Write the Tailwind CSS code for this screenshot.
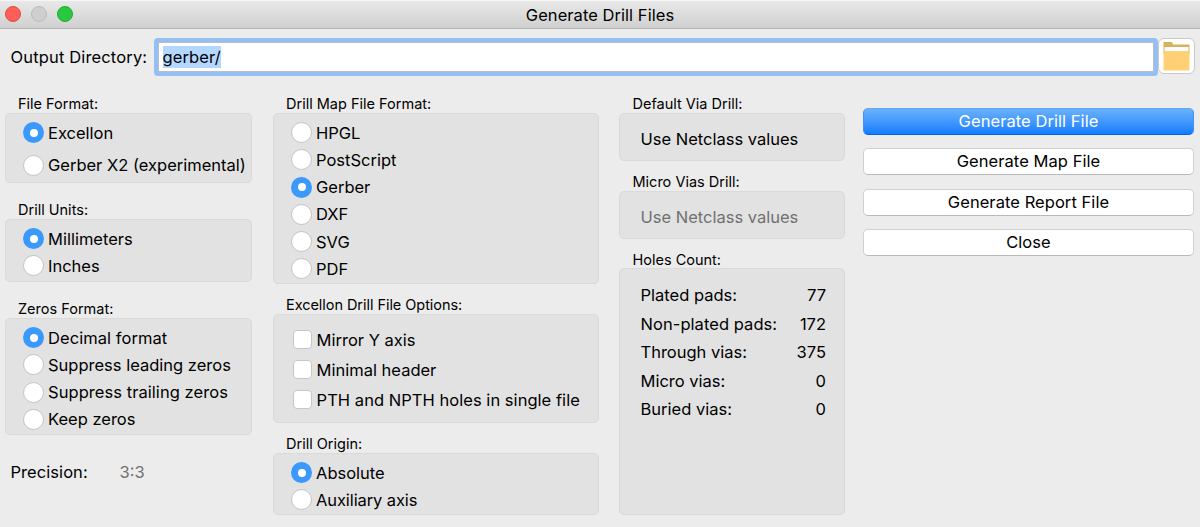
<!DOCTYPE html>
<html lang="en">
<head>
<meta charset="utf-8">
<title>Generate Drill Files</title>
<script src="https://cdn.jsdelivr.net/npm/@tailwindcss/browser@4"></script>
</head>
<body class="w-[1200px] h-[527px] overflow-hidden bg-[#ececec] font-[Inter,sans-serif] text-[16.5px] leading-5 text-black">
<header class="relative flex h-[29px] items-center justify-center border-t border-b border-t-[#f5f5f5] border-b-[#b4b4b4] bg-linear-to-b from-[#e8e8e8] to-[#d0d0d0]">
  <div class="absolute left-[5px] top-[5px] flex gap-[10px]">
    <i class="size-4 rounded-full border border-[#e2463f] bg-[#ff5f57]"></i>
    <i class="size-4 rounded-full border border-[#bcbcbc] bg-[#cfcfcf]"></i>
    <i class="size-4 rounded-full border border-[#1dac2b] bg-[#28c940]"></i>
  </div>
  <h1 class="tracking-[0.05px]">Generate Drill Files</h1>
</header>
<div class="flex h-[66px] items-start pt-[9px]">
  <label class="w-[153.5px] pl-[10.5px] pt-[9px] tracking-[0.15px]">Output Directory:</label>
  <div class="flex h-[38px] w-[1004.5px] rounded-[4px] bg-[#93bff3] p-1">
    <div class="flex flex-1 items-center border border-[#b9bcc6] bg-white pl-1"><span class="h-[22px] bg-[#b3d7ff] leading-[23px] tracking-[0.1px]">gerber/</span></div>
  </div>
  <button class="flex h-[36px] w-[37px] items-center justify-center rounded-[6px] border border-[#cbcbcb] bg-white">
    <svg width="27" height="29" viewBox="0 0 27 29"><path d="M.5 0h8.500l1 2.500h16.500V12H.5z" fill="#d9b15c"/><path d="M1.500 5h24v5h-24z" fill="#fff"/><path d="M.5 9h26v19.500H.5z" fill="#ffd076"/></svg>
  </button>
</div>
<main class="flex items-start">
  <div class="ml-[5px] w-[247px]">
    <h2 class="h-[18px] pl-[13px] text-[14.5px] leading-[18px]">File Format:</h2>
    <section class="flex h-[70px] flex-col gap-3 rounded-[5px] border border-[#dadada] bg-[#e2e2e2] pl-[17px] pt-[8px]">
      <label class="flex h-[21px] items-center gap-1"><i class="flex size-[21px] items-center justify-center rounded-full bg-[#3b99fc]"><b class="size-2 rounded-full bg-white"></b></i>Excellon</label>
      <label class="flex h-[21px] items-center gap-1 whitespace-nowrap leading-[19px]"><i class="size-[21px] rounded-full border border-[#c3c3c3] bg-white"></i>Gerber X2 (experimental)</label>
    </section>
    <h2 class="mt-[18px] h-[18px] pl-[13px] text-[14.5px] leading-[18px]">Drill Units:</h2>
    <section class="flex h-[63px] flex-col gap-[6.25px] rounded-[5px] border border-[#dadada] bg-[#e2e2e2] pl-[17px] pt-[8px]">
      <label class="flex h-[21px] items-center gap-1"><i class="flex size-[21px] items-center justify-center rounded-full bg-[#3b99fc]"><b class="size-2 rounded-full bg-white"></b></i>Millimeters</label>
      <label class="flex h-[21px] items-center gap-1"><i class="size-[21px] rounded-full border border-[#c3c3c3] bg-white"></i>Inches</label>
    </section>
    <h2 class="mt-[18px] h-[18px] pl-[13px] text-[14.5px] leading-[18px]">Zeros Format:</h2>
    <section class="flex h-[117px] flex-col gap-[6.25px] rounded-[5px] border border-[#dadada] bg-[#e2e2e2] pl-[17px] pt-[8px]">
      <label class="flex h-[21px] items-center gap-1 tracking-[0.06px]"><i class="flex size-[21px] items-center justify-center rounded-full bg-[#3b99fc]"><b class="size-2 rounded-full bg-white"></b></i>Decimal format</label>
      <label class="flex h-[21px] items-center gap-1"><i class="size-[21px] rounded-full border border-[#c3c3c3] bg-white"></i>Suppress leading zeros</label>
      <label class="flex h-[21px] items-center gap-1 tracking-[0.06px]"><i class="size-[21px] rounded-full border border-[#c3c3c3] bg-white"></i>Suppress trailing zeros</label>
      <label class="flex h-[21px] items-center gap-1"><i class="size-[21px] rounded-full border border-[#c3c3c3] bg-white"></i>Keep zeros</label>
    </section>
    <div class="mt-[27px] flex pl-[5.5px]"><span class="w-[109px] tracking-[0.06px]">Precision:</span><span class="text-[#707070]">3:3</span></div>
  </div>
  <div class="ml-[21px] w-[326px]">
    <h2 class="h-[18px] pl-[13px] text-[14.5px] leading-[18px]">Drill Map File Format:</h2>
    <section class="flex h-[171px] flex-col gap-[6.25px] rounded-[5px] border border-[#dadada] bg-[#e2e2e2] pl-[17px] pt-[8px]">
      <label class="flex h-[21px] items-center gap-1"><i class="size-[21px] rounded-full border border-[#c3c3c3] bg-white"></i>HPGL</label>
      <label class="flex h-[21px] items-center gap-1"><i class="size-[21px] rounded-full border border-[#c3c3c3] bg-white"></i>PostScript</label>
      <label class="flex h-[21px] items-center gap-1"><i class="flex size-[21px] items-center justify-center rounded-full bg-[#3b99fc]"><b class="size-2 rounded-full bg-white"></b></i>Gerber</label>
      <label class="flex h-[21px] items-center gap-1"><i class="size-[21px] rounded-full border border-[#c3c3c3] bg-white"></i>DXF</label>
      <label class="flex h-[21px] items-center gap-1"><i class="size-[21px] rounded-full border border-[#c3c3c3] bg-white"></i>SVG</label>
      <label class="flex h-[21px] items-center gap-1"><i class="size-[21px] rounded-full border border-[#c3c3c3] bg-white"></i>PDF</label>
    </section>
    <h2 class="mt-3 h-[18px] pl-[13px] text-[14.5px] leading-[18px] tracking-[-0.05px]">Excellon Drill File Options:</h2>
    <section class="flex h-[109px] flex-col gap-[11px] rounded-[5px] border border-[#dadada] bg-[#e2e2e2] pl-[19px] pt-[15px]">
      <label class="flex h-[19px] items-center gap-[4.6px]"><i class="size-[19px] rounded-[4px] border border-[#c6c6c6] bg-white"></i>Mirror Y axis</label>
      <label class="flex h-[19px] items-center gap-[4.6px]"><i class="size-[19px] rounded-[4px] border border-[#c6c6c6] bg-white"></i>Minimal header</label>
      <label class="flex h-[19px] items-center gap-[4.6px] whitespace-nowrap tracking-[0.04px]"><i class="size-[19px] rounded-[4px] border border-[#c6c6c6] bg-white"></i>PTH and NPTH holes in single file</label>
    </section>
    <h2 class="mt-3 h-[18px] pl-[13px] text-[14.5px] leading-[18px]">Drill Origin:</h2>
    <section class="flex h-[62px] flex-col gap-[6.25px] rounded-[5px] border border-[#dadada] bg-[#e2e2e2] pl-[17px] pt-[8px]">
      <label class="flex h-[21px] items-center gap-1"><i class="flex size-[21px] items-center justify-center rounded-full bg-[#3b99fc]"><b class="size-2 rounded-full bg-white"></b></i>Absolute</label>
      <label class="flex h-[21px] items-center gap-1 tracking-[-0.1px]"><i class="size-[21px] rounded-full border border-[#c3c3c3] bg-white"></i>Auxiliary axis</label>
    </section>
  </div>
  <div class="ml-5 w-[226px]">
    <h2 class="h-[18px] pl-[13.5px] text-[14.5px] leading-[18px]">Default Via Drill:</h2>
    <section class="h-12 rounded-[5px] border border-[#dadada] bg-[#e2e2e2] pl-[20.5px] pt-[15px]">Use Netclass values</section>
    <h2 class="mt-3 h-[18px] pl-[13.5px] text-[14.5px] leading-[18px]">Micro Vias Drill:</h2>
    <section class="h-12 rounded-[5px] border border-[#dadada] bg-[#e2e2e2] pl-[20.5px] pt-[15px] text-[#707070]">Use Netclass values</section>
    <h2 class="mt-[11px] h-[18px] pl-[13.5px] text-[14.5px] leading-[19px]">Holes Count:</h2>
    <section class="flex h-[247px] flex-col gap-[8.500px] rounded-[5px] border border-[#dadada] bg-[#e2e2e2] pl-[20.5px] pr-[18px] pt-4">
      <div class="flex justify-between"><span>Plated pads:</span><span>77</span></div>
      <div class="flex justify-between"><span class="tracking-[0.06px]">Non-plated pads:</span><span>172</span></div>
      <div class="flex justify-between"><span>Through vias:</span><span>375</span></div>
      <div class="flex justify-between"><span>Micro vias:</span><span>0</span></div>
      <div class="flex justify-between"><span>Buried vias:</span><span>0</span></div>
    </section>
  </div>
  <div class="ml-[18px] mt-[13px] flex w-[331px] flex-col gap-[13.3px] tracking-[0.06px]">
    <button class="h-[27px] rounded-[5px] border border-t-[#5ea9f5] border-x-[#3c92f5] border-b-[#0a62ee] bg-linear-to-b from-[#69b1fa] to-[#0d7dff] leading-[19px] text-white">Generate Drill File</button>
    <button class="h-[27px] rounded-[5px] border border-[#d0d0d0] border-b-[#b9b9b9] bg-white leading-[19px]">Generate Map File</button>
    <button class="h-[27px] rounded-[5px] border border-[#d0d0d0] border-b-[#b9b9b9] bg-white leading-[19px]">Generate Report File</button>
    <button class="h-[27px] rounded-[5px] border border-[#d0d0d0] border-b-[#b9b9b9] bg-white leading-[19px]">Close</button>
  </div>
</main>
</body>
</html>
